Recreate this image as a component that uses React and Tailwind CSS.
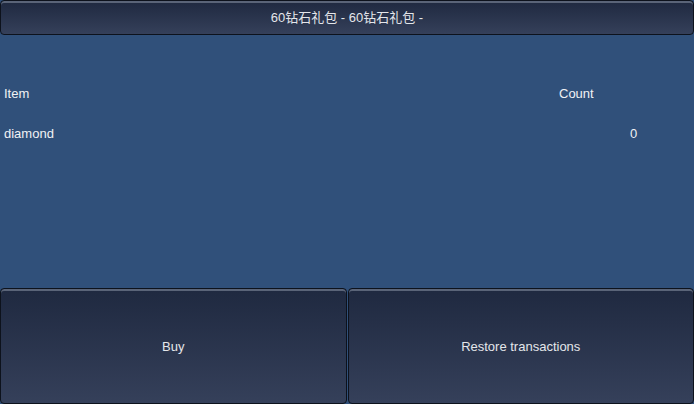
const Bar = ({ children, className = '' }) => (
  <div
    className={`flex items-center justify-center rounded-[4px] border border-[#0d121c] bg-gradient-to-b from-[#1f2940] to-[#35405a] shadow-[inset_0_2px_0_#5a6478] text-[13px] text-[#e4e6ea] ${className}`}
  >
    {children}
  </div>
);

export default function App() {
  return (
    <div
      className="flex h-[404px] w-[694px] flex-col overflow-hidden bg-[#30507a]"
      style={{ fontFamily: '"Liberation Sans", "Noto Sans CJK SC", sans-serif' }}
    >
      {/* Title */}
      <Bar className="h-[35px] shrink-0">60钻石礼包 - 60钻石礼包 -</Bar>

      {/* Items */}
      <div className="flex-1 pt-[50px] text-[13px] leading-[18px] text-[#f0f2f5]">
        <div className="flex">
          <div className="flex-1 pl-[4px]">Item</div>
          <div className="w-[135px]">Count</div>
        </div>
        <div className="mt-[22px] flex">
          <div className="flex-1 pl-[4px]">diamond</div>
          <div className="w-[135px] pl-[71px]">0</div>
        </div>
      </div>

      {/* Actions */}
      <div className="flex h-[116px] shrink-0 gap-[1px]">
        <Bar className="flex-1 pt-[2px]">Buy</Bar>
        <Bar className="flex-1 pt-[2px]">Restore transactions</Bar>
      </div>
    </div>
  );
}
